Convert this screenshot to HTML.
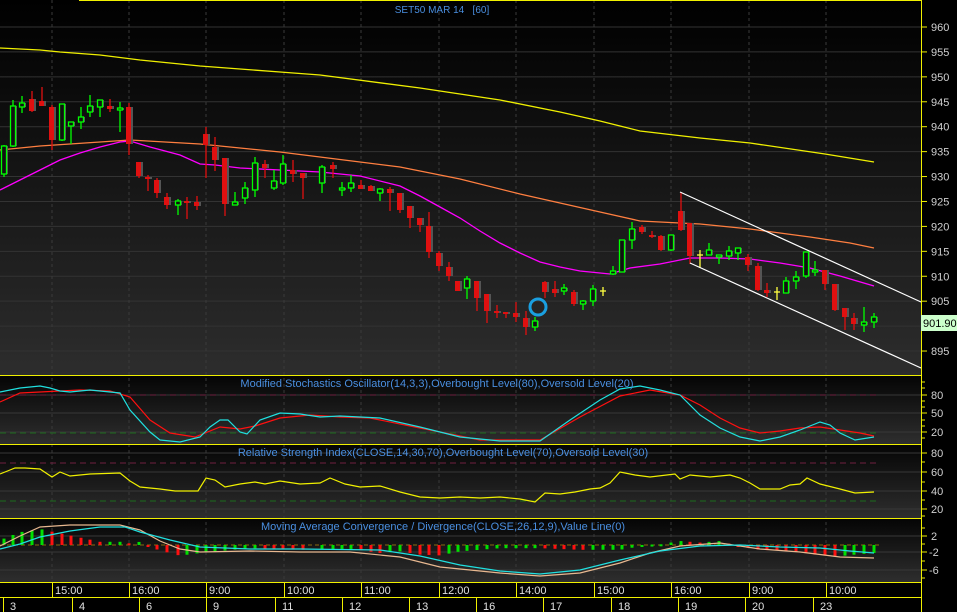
<!DOCTYPE html>
<html><head><meta charset="utf-8"><style>
html,body{margin:0;padding:0;background:#000;width:957px;height:612px;overflow:hidden}
svg{display:block;font-family:"Liberation Sans",sans-serif}
</style></head><body>
<svg id="s" width="957" height="612" xmlns="http://www.w3.org/2000/svg">
<defs>
<linearGradient id="gm" x1="0" y1="0" x2="0" y2="1"><stop offset="0" stop-color="#000"/><stop offset="1" stop-color="#2d2d2d"/></linearGradient>
<linearGradient id="gp" x1="0" y1="0" x2="0" y2="1"><stop offset="0" stop-color="#050505"/><stop offset="1" stop-color="#2e2e2e"/></linearGradient>
</defs>
<rect x="0" y="0" width="921" height="375" fill="url(#gm)"/>
<rect x="0" y="376" width="921" height="68" fill="url(#gp)"/>
<rect x="0" y="445" width="921" height="73" fill="url(#gp)"/>
<rect x="0" y="519" width="921" height="63" fill="url(#gp)"/>
<g id="g"></g>
</svg>
<script>
const S=document.getElementById('g');const NS='http://www.w3.org/2000/svg';
function el(t,a,txt){const e=document.createElementNS(NS,t);for(const k in a)e.setAttribute(k,a[k]);if(txt!=null)e.textContent=txt;S.appendChild(e);return e;}
function line(x1,y1,x2,y2,c,w,d){const a={x1,y1,x2,y2,stroke:c,'stroke-width':w||1};if(d)a['stroke-dasharray']=d;el('line',a);}
function pl(pts,c,w){el('polyline',{points:pts.map(p=>p.join(',')).join(' '),fill:'none',stroke:c,'stroke-width':w||1});}
const py=p=>27+(960-p)*4.985;
for(let p=895;p<=960;p+=5){const y=py(p);line(0,y,921,y,'#333',1);}
const vx=[52,129,206,284,361,439,516,594,671,749,826];
vx.forEach(x=>{line(x,0,x,582,'#3a3a3a',1,'3,3');});
[395,413,432].forEach(y=>line(0,y,921,y,'#383838',1));
[453,472,491,509].forEach(y=>line(0,y,921,y,'#383838',1));
[536,552,570].forEach(y=>line(0,y,921,y,'#383838',1));
line(0,395,880,395,'#702040',1,'6,4');line(0,433,880,433,'#1d6b1d',1,'6,4');
line(0,463,880,463,'#702040',1,'6,4');line(0,501,880,501,'#1d6b1d',1,'6,4');
line(0,545,880,545,'#8a6a10',1,'4,3');
pl([[0,48],[40,50],[60,52],[100,55],[140,60],[200,66],[280,72],[320,75],[420,88],[500,100],[560,112],[600,121],[640,131],[700,138],[750,143],[825,154],[874,162]],'#f0f000',1.3);
pl([[0,150],[40,146],[100,142],[130,140],[200,144],[280,152],[320,157],[400,167],[460,179],[520,194],[560,203],[600,212],[640,221],[700,224],[750,229],[810,237],[850,243],[874,248]],'#ff7f40',1.3);
pl([[0,190],[20,180],[40,170],[60,160],[80,153],[100,147],[120,142],[130,141],[150,147],[180,155],[200,164],[215,165],[240,168],[280,170],[320,172],[360,176],[400,186],[420,196],[440,207],[460,218],[480,231],[500,243],[520,253],[540,262],[560,267],[580,271],[600,273],[610,274],[630,268],[660,264],[690,258],[720,258],[750,259],[780,263],[810,268],[840,276],[874,286]],'#ff00ff',1.3);
const C=[[4,146,174,145,177,'g'],[13,106,146,100,147,'g'],[22,103,107,96,113,'g'],[32,99,111,91,112,'r'],[42,101,106,87,106,'r'],[52,107,140,105,150,'r'],[62,104,140,104,141,'g'],[71,122,126,122,144,'g'],[81,117,122,107,129,'g'],[90,106,112,95,117,'g'],[100,100,107,100,117,'g'],[110,106,109,99,112,'r'],[120,108,110,102,132,'g'],[129,107,144,103,155,'r'],[139,162,176,162,178,'r'],[148,177,179,175,191,'r'],[157,180,193,178,198,'r'],[167,197,205,193,209,'r'],[178,201,205,199,215,'g'],[187,201,203,197,219,'r'],[197,202,206,196,210,'r'],[206,134,145,127,178,'r'],[215,147,160,137,171,'r'],[225,158,204,158,216,'r'],[235,202,205,192,205,'g'],[245,188,198,182,204,'g'],[255,163,190,157,197,'g'],[265,164,168,160,178,'r'],[274,181,188,170,190,'g'],[283,164,183,155,185,'g'],[293,170,174,160,182,'r'],[303,173,178,173,199,'r'],[322,167,183,165,193,'g'],[333,165,169,162,178,'r'],[342,188,190,182,196,'g'],[351,183,188,175,192,'g'],[361,185,189,180,189,'r'],[371,186,191,185,191,'r'],[380,189,193,188,201,'g'],[390,189,193,187,211,'r'],[400,193,210,193,213,'r'],[410,206,218,206,228,'r'],[420,218,225,218,232,'r'],[429,226,252,212,258,'r'],[439,253,266,251,271,'r'],[449,267,276,262,281,'r'],[458,281,291,281,291,'r'],[467,279,288,276,299,'g'],[477,281,298,281,311,'r'],[487,294,311,294,323,'r'],[497,311,313,305,318,'r'],[506,312,314,312,318,'r'],[516,313,317,302,322,'r'],[526,318,327,311,335,'r'],[535,321,327,317,331,'g'],[545,282,292,281,298,'r'],[555,289,293,281,297,'r'],[564,288,291,284,295,'g'],[574,292,304,290,306,'r'],[583,301,304,300,310,'g'],[593,289,301,285,306,'g'],[603,291,292,287,296,'y'],[613,271,274,266,275,'g'],[622,240,272,240,272,'g'],[632,229,240,222,249,'g'],[642,227,232,225,234,'r'],[652,235,237,231,238,'r'],[661,236,250,235,251,'r'],[671,235,250,235,251,'g'],[681,211,230,192,231,'r'],[690,223,256,223,264,'r'],[700,255,256,250,268,'y'],[709,250,255,243,255,'g'],[719,255,257,255,264,'g'],[729,251,256,246,260,'g'],[738,248,253,248,260,'g'],[748,257,265,254,271,'r'],[758,266,290,263,291,'r'],[767,290,293,283,297,'r'],[777,292,293,287,300,'y'],[786,281,293,277,293,'g'],[796,277,281,271,289,'g'],[806,252,276,252,278,'g'],[815,270,272,261,276,'g'],[825,270,284,270,290,'r'],[835,284,310,284,311,'r'],[845,308,317,308,330,'r'],[854,318,324,313,330,'r'],[864,322,325,307,332,'g'],[874,317,322,313,328,'g']];
C.forEach(([x,t,b,wt,wb,c])=>{
 if(c==='y'){line(x,wt,x,wb,'#ffff40',1.3);line(x-3,t,x+3,t,'#ffff40',1.3);return;}
 const col=c==='g'?'#00ff00':'#e01010';
 line(x,wt,x,wb,col,1.3);
 el('rect',{x:x-1,y:t,width:5,height:Math.max(b-t,2),fill:'#555'});
 if(c==='g')el('rect',{x:x-2.5,y:t,width:5,height:Math.max(b-t,2),fill:'#111',stroke:col,'stroke-width':1.3});
 else el('rect',{x:x-3,y:t,width:5,height:Math.max(b-t,2),fill:col});
});
line(680,192,921,302,'#fff',1.2);line(690,263,921,368,'#fff',1.2);
el('circle',{cx:538,cy:307,r:8,fill:'none',stroke:'#1a9fe0','stroke-width':3});
function interp(pts,x){for(let i=0;i<pts.length-1;i++){if(x>=pts[i][0]&&x<=pts[i+1][0]){const f=(x-pts[i][0])/(pts[i+1][0]-pts[i][0]);return pts[i][1]+f*(pts[i+1][1]-pts[i][1]);}}return pts[pts.length-1][1];}
pl([[0,402],[20,393],[40,392],[60,391],[80,390],[110,391],[130,397],[150,420],[170,433],[195,437],[220,427],[240,429],[255,426],[280,418],[310,415],[340,417],[370,418],[420,428],[480,440],[540,440],[580,417],[620,396],[650,390],[680,395],[700,405],[720,418],[740,428],[760,433],[780,431],[800,428],[820,427],[840,430],[860,433],[874,436]],'#ff1010',1.2);
pl([[0,392],[20,388],[40,386],[50,388],[60,391],[70,392],[90,390],[110,392],[120,393],[130,410],[150,432],[160,440],[180,442],[200,437],[210,427],[220,420],[228,420],[240,432],[247,434],[260,420],[280,413],[300,414],[320,417],[340,416],[380,418],[420,427],[460,437],[500,441],[540,441],[570,420],[600,400],[620,389],[640,386],[660,390],[680,395],[700,415],[720,428],[740,437],[760,441],[780,437],[800,430],[820,422],[830,425],[840,433],[855,440],[874,437]],'#20e0e0',1.2);
pl([[0,474],[10,470],[15,468],[25,468],[40,469],[52,477],[60,472],[70,476],[90,474],[120,473],[130,481],[140,487],[160,489],[175,491],[198,491],[206,478],[215,480],[225,487],[240,484],[255,482],[265,484],[280,481],[300,484],[320,483],[330,478],[345,484],[360,487],[380,486],[400,492],[420,497],[440,498],[460,497],[480,498],[500,497],[520,499],[535,502],[545,493],[560,494],[575,492],[590,489],[600,488],[610,483],[620,472],[635,475],[650,477],[675,474],[680,479],[690,475],[710,477],[730,475],[740,478],[750,483],[760,489],[780,489],[790,485],[800,484],[807,478],[820,484],[840,489],[855,493],[874,492]],'#f0f000',1.2);
const mc=[[0,549],[20,544],[40,537],[70,531],[100,527],[125,527],[140,532],[170,540],[200,547],[250,549],[300,549],[380,550],[420,556],[460,565],[500,571],[540,574],[580,570],[620,560],[660,551],[700,546],[740,545],[780,547],[820,548],[850,551],[874,553]];
const sg=[[0,546],[20,536],[40,527],[70,525],[120,525],[140,530],[160,541],[180,549],[200,552],[250,551],[300,552],[350,552],[400,557],[440,567],[500,573],[540,576],[580,573],[620,563],[650,553],[680,546],[720,543],[760,549],[800,552],[840,557],[874,558]];
let prev=null;
C.forEach(([x])=>{const v=(interp(mc,x)-interp(sg,x))*1.6;const col=(prev===null||v>=prev)?'#00e000':'#ff1010';prev=v;
 const y0=545,y1=545-v;el('rect',{x:x-1.5,y:Math.min(y0,y1),width:3,height:Math.max(Math.abs(v),2),fill:col});});
pl(sg,'#e8b890',1.2);pl(mc,'#20e0e0',1.2);
el('text',{x:442,y:13,fill:'#4a8fe0','font-size':10,'text-anchor':'middle',style:'white-space:pre'},'SET50 MAR 14   [60]');
el('text',{x:437,y:387,fill:'#4a8fe0','font-size':11,'text-anchor':'middle'},'Modified Stochastics Oscillator(14,3,3),Overbought Level(80),Oversold Level(20)');
el('text',{x:443,y:456,fill:'#4a8fe0','font-size':11,'text-anchor':'middle'},'Relative Strength Index(CLOSE,14,30,70),Overbought Level(70),Oversold Level(30)');
el('text',{x:443,y:530,fill:'#4a8fe0','font-size':11,'text-anchor':'middle'},'Moving Average Convergence / Divergence(CLOSE,26,12,9),Value Line(0)');
line(79,0.5,921,0.5,'#f0f000',1);
line(921.5,0,921.5,612,'#f0f000',1);
[375.5,444.5,518.5,582.5,597.5].forEach(y=>line(0,y,921,y,'#f0f000',1));
for(let p=895;p<=960;p+=5){const y=py(p);line(921,y,927,y,'#f0f000',1);el('text',{x:931,y:y+4,fill:'#d0d0d0','font-size':11},String(p));}
el('rect',{x:921,y:315,width:36,height:16,fill:'#ccffcc'});
el('text',{x:923,y:327,fill:'#000','font-size':11},'901.90');
[[395,'80'],[413,'50'],[432,'20'],[453,'80'],[472,'60'],[491,'40'],[509,'20'],[536,'2'],[552,'-2'],[570,'-6']].forEach(([y,t])=>{line(921,y,927,y,'#f0f000',1);el('text',{x:t[0]==='-'?929:931,y:y+4,fill:'#d0d0d0','font-size':11},t);});
[382,388,401,407,420,426,438,462,482,500,516,528,544,561,578].forEach(y=>line(921,y,925,y,'#f0f000',1));
[[52,'15:00'],[129,'16:00'],[206,'9:00'],[284,'10:00'],[361,'11:00'],[439,'12:00'],[516,'14:00'],[594,'15:00'],[671,'16:00'],[749,'9:00'],[826,'10:00']].forEach(([x,t])=>{line(x+0.5,582,x+0.5,597,'#f0f000',1);el('text',{x:x+3,y:594,fill:'#e0e0e0','font-size':11},t);});
[[3,'3'],[72,'4'],[139,'6'],[206,'9'],[275,'11'],[342,'12'],[409,'13'],[476,'16'],[543,'17'],[611,'18'],[678,'19'],[745,'20'],[813,'23']].forEach(([x,t])=>{line(x+0.5,597,x+0.5,612,'#f0f000',1);el('text',{x:x+7,y:610,fill:'#e0e0e0','font-size':11},t);});
</script>
</body></html>
